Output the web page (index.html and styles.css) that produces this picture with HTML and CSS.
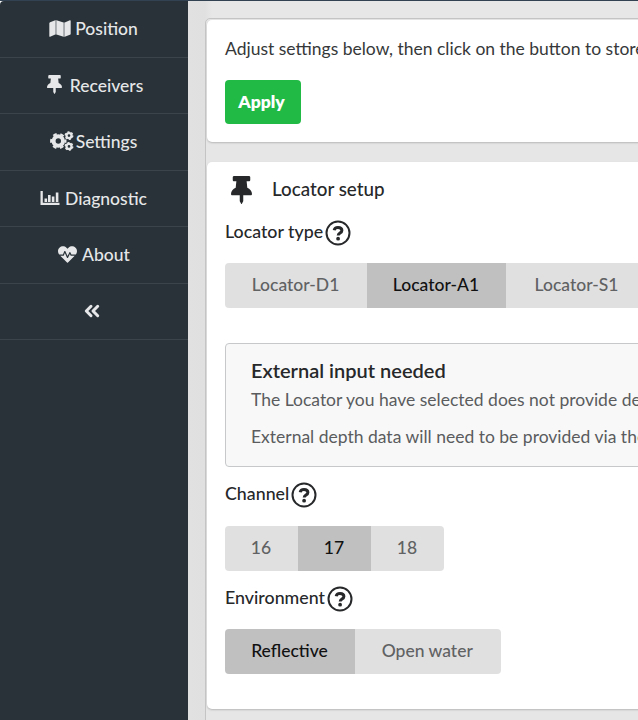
FILE: index.html
```html
<!DOCTYPE html>
<html lang="en">
<head>
<meta charset="utf-8">
<title>Settings</title>
<link rel="stylesheet" href="styles.css">
</head>
<body>
<svg class="defs" width="0" height="0">
  <symbol id="pin" viewBox="0 0 384 512" preserveAspectRatio="none"><path d="M298.028 214.267L285.793 96H328c13.255 0 24-10.745 24-24V24c0-13.255-10.745-24-24-24H56C42.745 0 32 10.745 32 24v48c0 13.255 10.745 24 24 24h42.207L85.972 214.267C37.465 236.82 0 277.261 0 328c0 13.255 10.745 24 24 24h136v104.007c0 1.242.289 2.467.845 3.578l24 48c2.941 5.882 11.364 5.893 14.311 0l24-48a8.008 8.008 0 0 0 .845-3.578V352h136c13.255 0 24-10.745 24-24-.001-51.183-37.983-91.42-85.973-113.733z"/></symbol>
  <symbol id="help" viewBox="0 0 26 26"><circle cx="13" cy="13" r="11.5" fill="none" stroke="currentColor" stroke-width="2"/><path d="M9.200 10.2C9.500 8.5 10.900 7.500 13 7.500c2.300 0 3.900 1.200 3.900 3 0 2.600-3.700 2.500-3.700 5" fill="none" stroke="currentColor" stroke-width="3"/><circle cx="13.100" cy="18.700" r="1.900"/></symbol>
</svg>
<div class="app">
  <nav class="sidebar">
    <a class="item"><svg class="map" width="22" height="19" viewBox="0 0 576 512"><path d="M0 117.66v346.32c0 11.32 11.43 19.06 21.94 14.86L160 416V32L20.12 87.95A32.006 32.006 0 0 0 0 117.66zM192 416l192 64V96L192 32v384zM554.06 33.16L416 96v384l139.88-55.95A31.996 31.996 0 0 0 576 394.34V48.02c0-11.32-11.43-19.06-21.94-14.86z"/><path class="fold" d="M160 32h32v384h-32zM384 96h32v384h-32z"/></svg><span>Position</span></a>
    <a class="item receivers"><svg width="15" height="19"><use href="#pin"/></svg><span>Receivers</span></a>
    <a class="item settings"><svg width="24" height="20" viewBox="0 0 24 20"><g fill="none" stroke="currentColor"><circle cx="8.300" cy="10" r="4.700" stroke-width="4"/><circle cx="8.300" cy="10" r="7.200" stroke-width="2" stroke-dasharray="3.770 3.770" stroke-dashoffset="1.880"/><circle cx="19" cy="4.600" r="2.500" stroke-width="2.300"/><circle cx="19" cy="4.600" r="3.800" stroke-width="1.300" stroke-dasharray="2 1.980"/><circle cx="19" cy="15.400" r="2.500" stroke-width="2.300"/><circle cx="19" cy="15.400" r="3.800" stroke-width="1.300" stroke-dasharray="2 1.980"/></g></svg><span>Settings</span></a>
    <a class="item diagnostic"><svg width="20" height="16" viewBox="0 0 20 16"><path d="M.5 1h2.300v11.700h16.700V15H.5zM4.500 8.500h2.600V12H4.500zM8 5h2.600v7H8zM11.800 6.500h2.600V12h-2.600zM15.800 2.500h2.600V12h-2.600z"/></svg><span>Diagnostic</span></a>
    <a class="item about"><svg width="19" height="19" viewBox="0 0 512 512"><path d="M320.2 243.8l-49.7 99.4c-6 12.1-23.4 11.7-28.9-.6l-56.9-126.3-30 71.7H60.6l182.500 186.500c7.100 7.300 18.600 7.300 25.700 0L451.400 288H342.300l-22.100-44.200zM473.700 73.900l-2.400-2.500c-51.500-52.600-135.800-52.600-187.400 0L256 100l-27.900-28.500c-51.500-52.700-135.900-52.700-187.400 0l-2.400 2.400C-10.400 123.700-12.500 203 31 256h102.400l35.900-86.200c5.400-12.900 23.600-13.100 29.400-.4l58.200 129.300 49-97.900c5.900-11.800 22.700-11.800 28.600 0l27.600 55.200H481c43.500-53 41.400-132.300-7.300-182.100z"/></svg><span>About</span></a>
    <a class="item collapse"><svg width="16" height="14" viewBox="0 0 16 14"><path d="M7 2.300L2.300 7L7 11.700M13.700 2.300L9 7l4.700 4.700" fill="none" stroke="currentColor" stroke-width="3" stroke-linejoin="round" stroke-linecap="round"/></svg></a>
  </nav>
  <main class="content">
    <div class="panel">
      <section class="card apply">
        <p>Adjust settings below, then click on the button to store</p>
        <button class="primary">Apply</button>
      </section>
      <section class="card setup">
        <h2><svg width="21" height="28"><use href="#pin"/></svg><span>Locator setup</span></h2>
        <div class="label type">Locator type<svg width="26" height="26"><use href="#help"/></svg></div>
        <div class="group types"><button>Locator-D1</button><button class="active">Locator-A1</button><button>Locator-S1</button></div>
        <div class="message">
          <h3>External input needed</h3>
          <p>The Locator you have selected does not provide depth</p>
          <p>External depth data will need to be provided via the</p>
        </div>
        <div class="label">Channel<svg width="26" height="26"><use href="#help"/></svg></div>
        <div class="group channels"><button>16</button><button class="active">17</button><button>18</button></div>
        <div class="label env">Environment<svg width="26" height="26"><use href="#help"/></svg></div>
        <div class="group envs"><button class="active">Reflective</button><button>Open water</button></div>
      </section>
    </div>
  </main>
</div>
</body>
</html>
```
FILE: styles.css
```css
* { box-sizing: border-box; }
body { margin: 0; height: 720px; overflow: hidden; background: #fff; color: #26282a; font: 17.500px/26px Lato, sans-serif; white-space: nowrap; }
.defs { display: block; height: 0; }
svg { fill: currentColor; flex: none; }
p, h2, h3 { margin: 0; }
.app { display: flex; height: 720px; border-top: 1px solid #334252; }
.sidebar { width: 188px; flex: none; background: #283238; border-top-left-radius: 4px; color: #e6e7e8; }
.item { height: 56.500px; display: flex; align-items: center; justify-content: center; gap: 4px; padding: 1px 1px 0 0; border-bottom: 1px solid #3a444a; font-size: 17.500px; font-weight: 500; }
.item svg { position: relative; top: -1px; }
.fold { opacity: .75; }
.receivers { gap: 8px; padding-left: 3px; }
.settings { gap: 2px; }
.diagnostic { gap: 5px; }
.about { gap: 5px; padding-right: 0; }
.collapse { padding-right: 4px; padding-top: 2px; }
.content { flex: 1; min-width: 0; overflow: hidden; padding: 17px 0 0 17px; background: linear-gradient(90deg, #e1e1e1, #e0e0e0 17px, #e7e7e7 24px); }
.panel { width: 700px; height: 730px; padding: 1px 0 0 1px; border: 1px solid #c4c4c4; border-radius: 5px; background: #e6e6e6; }
.card { background: #fff; border-radius: 5px; box-shadow: 0 1px 2px #b8b8b8; padding: 0 18px; }
.apply { height: 122px; padding-top: 16px; margin-bottom: 20px; }
.apply p { color: #363839; }
button { font: 500 17.500px/24px Lato, sans-serif; border: 0; padding: 0 0 2px; background: #e0e0e1; color: #606263; }
.primary { display: block; width: 76px; height: 44px; margin-top: 18px; padding: 0 3px 1px 0; border-radius: 4px; background: #21ba45; color: #fff; font-weight: 800; }
.setup { height: 547px; padding-top: 14px; }
h2 { display: flex; align-items: center; gap: 20px; height: 28px; padding-left: 6px; font-size: 18.800px; font-weight: 500; }
h2 span { margin-top: -2px; }
.label { display: flex; height: 26px; margin-top: 14px; font-size: 17.800px; font-weight: 500; gap: 2px; line-height: 25px; }
.label svg { margin-top: 1px; }
.type { line-height: 27px; }
.type svg { margin-top: 2px; }
.group { display: flex; margin-top: 19px; height: 45px; overflow: hidden; border-radius: 4px; width: max-content; }
.group button { height: 45px; padding-right: 1px; }
.group .active { background: #c0c0c1; color: #111; }
.types button { width: 142px; }
.types .active { width: 139px; }
.channels button { width: 73px; }
.envs button { width: 145.500px; }
.envs .active { width: 130px; }
.message { width: 660px; height: 124px; margin-top: 35px; padding: 13px 25px; background: #f8f8f8; border: 1px solid #c6c8ca; border-radius: 4px; }
.message h3 { font-size: 20px; line-height: 27px; font-weight: 600; }
.message p { color: #5a5c5e; line-height: 26px; margin-top: 3px; }
.message p + p { margin-top: 11px; }
.env + .group { margin-top: 18px; }
```
